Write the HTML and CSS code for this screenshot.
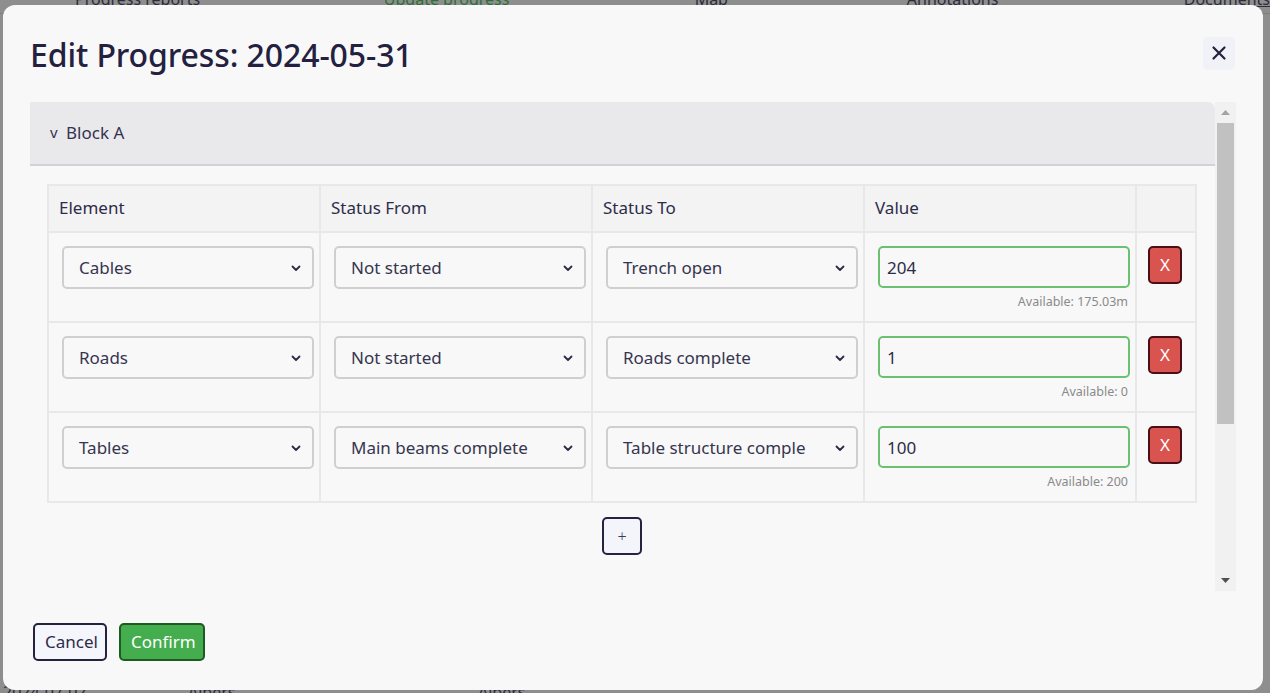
FILE: index.html
```html
<!DOCTYPE html>
<html lang="en">
<head>
<meta charset="utf-8">
<title>Edit Progress</title>
<link rel="stylesheet" href="styles.css">
</head>
<body>
<div class="backdrop">
  <nav class="bg-tabs">
    <span class="bg-tab t1">Progress reports</span>
    <span class="bg-tab t2 green">Update progress</span>
    <span class="bg-tab t3">Map</span>
    <span class="bg-tab t4">Annotations</span>
    <span class="bg-tab t5 under">Documents</span>
  </nav>
  <div class="bg-row">
    <span class="bg-cell c1">2024-07-02</span>
    <span class="bg-cell c2">Albers</span>
    <span class="bg-cell c3">Albers</span>
  </div>
</div>

<div class="modal">
  <header class="modal-header">
    <h1 class="modal-title">Edit Progress: 2024-05-31</h1>
    <button class="close-btn" aria-label="Close">
      <svg width="16" height="16" viewBox="0 0 16 16"><path d="M2.5 2.5 L13.5 13.5 M13.5 2.5 L2.5 13.5" stroke="#23213f" stroke-width="2.2" stroke-linecap="round"/></svg>
    </button>
  </header>

  <div class="modal-body">
    <div class="scroll-content">
      <div class="accordion-header"><span class="caret">v</span>Block A</div>
      <div class="accordion-body">
        <table class="progress-table">
          <thead>
            <tr>
              <th class="col">Element</th>
              <th class="col">Status From</th>
              <th class="col">Status To</th>
              <th class="col">Value</th>
              <th class="col-del"></th>
            </tr>
          </thead>
          <tbody>
            <tr>
              <td><div class="select"><span>Cables</span><svg class="chev" width="10" height="7" viewBox="0 0 10 7"><path d="M1.5 1.5 L5 5 L8.5 1.5" fill="none" stroke="#2b2a45" stroke-width="1.8" stroke-linecap="round" stroke-linejoin="round"/></svg></div></td>
              <td><div class="select"><span>Not started</span><svg class="chev" width="10" height="7" viewBox="0 0 10 7"><path d="M1.5 1.5 L5 5 L8.5 1.5" fill="none" stroke="#2b2a45" stroke-width="1.8" stroke-linecap="round" stroke-linejoin="round"/></svg></div></td>
              <td><div class="select"><span>Trench open</span><svg class="chev" width="10" height="7" viewBox="0 0 10 7"><path d="M1.5 1.5 L5 5 L8.5 1.5" fill="none" stroke="#2b2a45" stroke-width="1.8" stroke-linecap="round" stroke-linejoin="round"/></svg></div></td>
              <td><input class="value-input" type="text" value="204"><div class="avail">Available: 175.03m</div></td>
              <td class="del-cell"><button class="del-btn">X</button></td>
            </tr>
            <tr>
              <td><div class="select"><span>Roads</span><svg class="chev" width="10" height="7" viewBox="0 0 10 7"><path d="M1.5 1.5 L5 5 L8.5 1.5" fill="none" stroke="#2b2a45" stroke-width="1.8" stroke-linecap="round" stroke-linejoin="round"/></svg></div></td>
              <td><div class="select"><span>Not started</span><svg class="chev" width="10" height="7" viewBox="0 0 10 7"><path d="M1.5 1.5 L5 5 L8.5 1.5" fill="none" stroke="#2b2a45" stroke-width="1.8" stroke-linecap="round" stroke-linejoin="round"/></svg></div></td>
              <td><div class="select"><span>Roads complete</span><svg class="chev" width="10" height="7" viewBox="0 0 10 7"><path d="M1.5 1.5 L5 5 L8.5 1.5" fill="none" stroke="#2b2a45" stroke-width="1.8" stroke-linecap="round" stroke-linejoin="round"/></svg></div></td>
              <td><input class="value-input" type="text" value="1"><div class="avail">Available: 0</div></td>
              <td class="del-cell"><button class="del-btn">X</button></td>
            </tr>
            <tr>
              <td><div class="select"><span>Tables</span><svg class="chev" width="10" height="7" viewBox="0 0 10 7"><path d="M1.5 1.5 L5 5 L8.5 1.5" fill="none" stroke="#2b2a45" stroke-width="1.8" stroke-linecap="round" stroke-linejoin="round"/></svg></div></td>
              <td><div class="select"><span>Main beams complete</span><svg class="chev" width="10" height="7" viewBox="0 0 10 7"><path d="M1.5 1.5 L5 5 L8.5 1.5" fill="none" stroke="#2b2a45" stroke-width="1.8" stroke-linecap="round" stroke-linejoin="round"/></svg></div></td>
              <td><div class="select"><span>Table structure comple</span><svg class="chev" width="10" height="7" viewBox="0 0 10 7"><path d="M1.5 1.5 L5 5 L8.5 1.5" fill="none" stroke="#2b2a45" stroke-width="1.8" stroke-linecap="round" stroke-linejoin="round"/></svg></div></td>
              <td><input class="value-input" type="text" value="100"><div class="avail">Available: 200</div></td>
              <td class="del-cell"><button class="del-btn">X</button></td>
            </tr>
          </tbody>
        </table>
        <div class="add-row"><button class="add-btn">+</button></div>
      </div>
    </div>
    <div class="scrollbar">
      <div class="sb-arrow up"><svg width="9" height="5" viewBox="0 0 9 5"><path d="M0 5 L4.5 0 L9 5 Z" fill="#a3a3a3"/></svg></div>
      <div class="sb-track"><div class="sb-thumb"></div></div>
      <div class="sb-arrow down"><svg width="9" height="5" viewBox="0 0 9 5"><path d="M0 0 L4.5 5 L9 0 Z" fill="#505050"/></svg></div>
    </div>
  </div>

  <footer class="modal-footer">
    <button class="btn btn-cancel">Cancel</button>
    <button class="btn btn-confirm">Confirm</button>
  </footer>
</div>
</body>
</html>
```
FILE: styles.css
```css
* { box-sizing: border-box; }

html, body {
  margin: 0;
  padding: 0;
  width: 1270px;
  height: 693px;
  overflow: hidden;
}

body {
  background: #8e8e8e;
  font-family: "Noto Sans", "Liberation Sans", sans-serif;
  color: #26244a;
}

/* ---------- background page (under overlay) ---------- */
.backdrop {
  height: 693px;
  display: flex;
  flex-direction: column;
  justify-content: space-between;
  font-size: 16px;
  color: #2c2c3a;
}
.bg-tabs {
  display: flex;
  margin-top: -12px;
  height: 26px;
  line-height: 22px;
  border-bottom: 1px solid #7e7e7e;
}
.bg-tab { display: block; }
.t1 { margin-left: 75px; width: 310px; }
.t2 { width: 312px; }
.t3 { width: 213px; }
.t4 { width: 278px; }
.green { color: #2f6f35; }
.under { text-decoration: underline; }
.bg-row {
  display: flex;
  height: 16px;
  margin-bottom: -8px;
  line-height: 14px;
}
.bg-cell { display: block; }
.c1 { width: 185px; margin-left: 3px; }
.c2 { width: 290px; }

/* ---------- modal ---------- */
.modal {
  position: absolute;
  left: 3px;
  top: 5px;
  width: 1260px;
  height: 685px;
  background: #f8f8f8;
  border-radius: 12px;
  display: flex;
  flex-direction: column;
  padding: 0 27px;
}

.modal-header {
  display: flex;
  align-items: center;
  justify-content: space-between;
  height: 97px;
  padding-top: 2px;
}
.modal-title {
  margin: 0;
  font-size: 32px;
  font-weight: 500;
  letter-spacing: -0.1px;
  color: #23213f;
  line-height: 40px;
}
.close-btn {
  width: 32px;
  height: 33px;
  border: none;
  border-radius: 5px;
  background: #f1f2f7;
  display: flex;
  align-items: center;
  justify-content: center;
  padding: 0;
  margin-right: 1px;
  margin-top: -3px;
}

.modal-body {
  height: 489px;
  display: flex;
  overflow: hidden;
}
.scroll-content {
  flex: 1;
  overflow: hidden;
}

.accordion-header {
  height: 64px;
  background: #e9e9eb;
  border-bottom: 2px solid #d2d2d4;
  border-top-right-radius: 7px;
  display: flex;
  align-items: center;
  padding-left: 20px;
  padding-bottom: 2px;
  font-size: 17px;
  color: #34334f;
}
.caret {
  font-size: 15px;
  width: 16px;
  margin-top: -1px;
}

.accordion-body {
  padding: 18px 20px 0 17px;
}

.progress-table {
  width: 1148px;
  border-collapse: collapse;
  table-layout: fixed;
  font-size: 17px;
}
.progress-table th,
.progress-table td {
  border: 2px solid #e8e8e8;
}
.progress-table th {
  background: #f3f3f3;
  height: 47px;
  text-align: left;
  font-weight: 400;
  padding: 0 10px 2px;
  color: #2d2c49;
}
.col { width: 272px; }
.col-del { width: 60px; }

.progress-table td {
  height: 90px;
  vertical-align: top;
  padding: 13px 5px 0 13px;
}

.select {
  height: 43px;
  border: 2px solid #cfcfcf;
  border-radius: 5px;
  background: #f8f8f8;
  display: flex;
  align-items: center;
  justify-content: space-between;
  padding: 0 11px 0 15px;
  color: #36354f;
  white-space: nowrap;
  overflow: hidden;
}
.chev { flex: none; margin-top: 1px; }

.value-input {
  display: block;
  width: 100%;
  height: 42px;
  border: 2px solid #6cc170;
  border-radius: 5px;
  background: #f8f8f8;
  font-family: inherit;
  font-size: 17px;
  color: #2d2c49;
  padding: 0 7px;
  outline: none;
}
.avail {
  text-align: right;
  font-size: 12.5px;
  color: #8a8a8a;
  padding-right: 2px;
  margin-top: 6px;
  line-height: 16px;
}

.progress-table td.del-cell {
  padding: 13px 0 0 11px;
}
.del-btn {
  width: 34px;
  height: 38px;
  background: #d9534f;
  border: 2px solid #4b0e17;
  border-radius: 5px;
  color: #ffffff;
  font-family: inherit;
  font-size: 17px;
  padding: 0 0 2px;
}

.add-row {
  display: flex;
  justify-content: center;
  padding-top: 14px;
  padding-left: 2px;
}
.add-btn {
  width: 40px;
  height: 38px;
  background: #f4f5fa;
  border: 2px solid #25233f;
  border-radius: 5px;
  font-family: inherit;
  font-size: 16px;
  font-weight: 300;
  color: #3b3a55;
  padding: 0;
}

/* fake scrollbar */
.scrollbar {
  width: 21px;
  flex: none;
  background: #f1f1f1;
  display: flex;
  flex-direction: column;
}
.sb-arrow {
  height: 21px;
  display: flex;
  align-items: center;
  justify-content: center;
}
.sb-track {
  flex: 1;
  padding: 0 2px;
}
.sb-thumb {
  height: 301px;
  background: #c1c1c1;
}

.modal-footer {
  display: flex;
  gap: 12px;
  padding-top: 32px;
  padding-left: 3px;
}
.btn {
  height: 38px;
  border-radius: 5px;
  font-family: inherit;
  font-size: 17px;
  padding: 0 10px 2px;
}
.btn-cancel {
  width: 74px;
  background: #f5f6fb;
  border: 2px solid #24223f;
  color: #2d2c49;
}
.btn-confirm {
  width: 86px;
  background: #44ad4e;
  border: 2px solid #1d5b23;
  color: #ffffff;
}
```
